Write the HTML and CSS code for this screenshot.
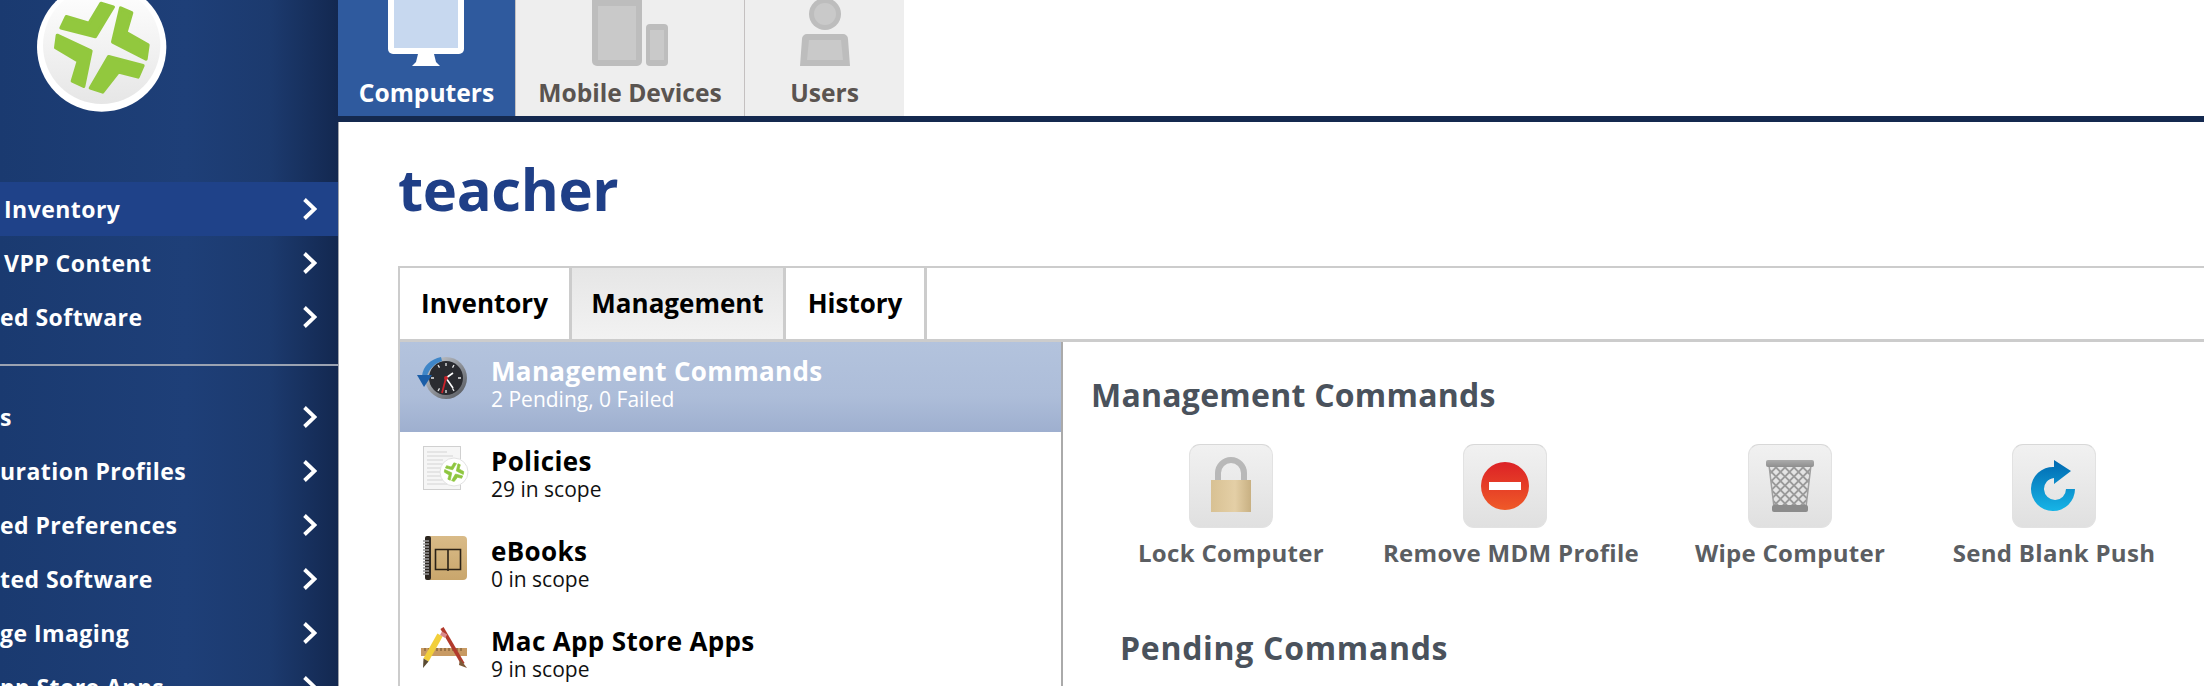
FILE: index.html
```html
<!DOCTYPE html>
<html lang="en">
<head>
<meta charset="utf-8">
<title>teacher</title>
<link rel="stylesheet" href="styles.css">
</head>
<body>
<aside class="sidebar">
  <div class="logo-wrap">
    <svg class="logo" width="170" height="182" viewBox="0 0 510 546">
      <defs><linearGradient id="lg" x1="0" y1="0" x2="0" y2="1"><stop offset="0" stop-color="#fff"/><stop offset="1" stop-color="#e6e6e6"/></linearGradient></defs>
      <circle cx="245" cy="141" r="194" fill="#fff"/>
      <circle cx="245" cy="136" r="176" fill="url(#lg)"/>
      <g fill="#92c83e" stroke="#92c83e" stroke-width="10" stroke-linejoin="round">
        <polygon points="139,50 207,70 243,10 280,21 226,110 123,84"/>
        <polygon points="302,24 335,38 318,97 384,135 378,177 278,126"/>
        <polygon points="266,170 369,197 354,231 295,216 248,276 211,264"/>
        <polygon points="112,106 213,153 191,259 157,243 175,183 107,143"/>
      </g>
    </svg>
  </div>
  <nav class="nav">
    <a class="nav-item active"><span class="nav-text pad4">Inventory</span><svg class="chev" viewBox="0 0 15 24"><path d="M2.5 2.5 12.5 12 2.5 21.5"/></svg></a>
    <a class="nav-item"><span class="nav-text pad4">VPP Content</span><svg class="chev" viewBox="0 0 15 24"><path d="M2.5 2.5 12.5 12 2.5 21.5"/></svg></a>
    <a class="nav-item"><span class="nav-text">ed Software</span><svg class="chev" viewBox="0 0 15 24"><path d="M2.5 2.5 12.5 12 2.5 21.5"/></svg></a>
    <div class="nav-sep"></div>
    <a class="nav-item"><span class="nav-text">s</span><svg class="chev" viewBox="0 0 15 24"><path d="M2.5 2.5 12.5 12 2.5 21.5"/></svg></a>
    <a class="nav-item"><span class="nav-text">uration Profiles</span><svg class="chev" viewBox="0 0 15 24"><path d="M2.5 2.5 12.5 12 2.5 21.5"/></svg></a>
    <a class="nav-item"><span class="nav-text">ed Preferences</span><svg class="chev" viewBox="0 0 15 24"><path d="M2.5 2.5 12.5 12 2.5 21.5"/></svg></a>
    <a class="nav-item"><span class="nav-text">ted Software</span><svg class="chev" viewBox="0 0 15 24"><path d="M2.5 2.5 12.5 12 2.5 21.5"/></svg></a>
    <a class="nav-item"><span class="nav-text">ge Imaging</span><svg class="chev" viewBox="0 0 15 24"><path d="M2.5 2.5 12.5 12 2.5 21.5"/></svg></a>
    <a class="nav-item"><span class="nav-text">pp Store Apps</span><svg class="chev" viewBox="0 0 15 24"><path d="M2.5 2.5 12.5 12 2.5 21.5"/></svg></a>
  </nav>
</aside>
<main class="main">
  <div class="top-tabs">
    <a class="top-tab tab-computers active">
      <svg class="top-icon" width="177" height="66" viewBox="0 0 177 66">
        <path d="M50 -10H126V49a5 5 0 0 1-5 5H55a5 5 0 0 1-5-5Z" fill="#fff"/>
        <rect x="56" y="-10" width="64" height="58" fill="#c7d8ef"/>
        <path d="M80 54H96L98 62 102 66H74L78 62Z" fill="#fff"/>
      </svg>
      <span class="top-label">Computers</span>
    </a>
    <a class="top-tab tab-mobile">
      <svg class="top-icon" width="228" height="66" viewBox="0 0 228 66">
        <rect x="76" y="-6" width="50" height="72" rx="5" fill="#bdbdbd"/>
        <rect x="82" y="6" width="38" height="54" fill="#c9c9c9"/>
        <rect x="130" y="24" width="22" height="42" rx="4" fill="#bdbdbd"/>
        <rect x="134" y="30" width="14" height="30" fill="#c9c9c9"/>
      </svg>
      <span class="top-label">Mobile Devices</span>
    </a>
    <a class="top-tab tab-users">
      <svg class="top-icon" width="160" height="66" viewBox="0 0 160 66">
        <circle cx="80" cy="14" r="16" fill="#bdbdbd"/>
        <circle cx="80" cy="14" r="11" fill="#c9c9c9"/>
        <path d="M62 34H98a5 5 0 0 1 5 5L105 66H55L57 39a5 5 0 0 1 5-5Z" fill="#bdbdbd"/>
        <path d="M64 40H96L98 60H62Z" fill="#c9c9c9"/>
      </svg>
      <span class="top-label">Users</span>
    </a>
  </div>
  <div class="top-rule"></div>
  <div class="content">
    <h1 class="title">teacher</h1>
    <section class="panel">
      <div class="panel-tabs">
        <a class="panel-tab t-inv">Inventory</a>
        <a class="panel-tab t-mgmt active">Management</a>
        <a class="panel-tab t-hist">History</a>
      </div>
      <div class="panel-body">
        <ul class="list">
          <li class="li selected">
            <svg class="li-icon" width="52" height="52" viewBox="0 0 52 52">
              <defs><linearGradient id="cl" x1="0" y1="0" x2="1" y2="1"><stop offset="0" stop-color="#d0d4da"/><stop offset="1" stop-color="#4f5258"/></linearGradient></defs>
              <circle cx="29" cy="26" r="21" fill="url(#cl)"/>
              <circle cx="29" cy="26" r="17" fill="#2a2b30"/>
              <g stroke="#e8e8e8" stroke-width="1.3"><path d="M29 11v3M29 38v3M14 26h3M41 26h3M21 13l1.5 2.6M37 13l-1.5 2.6M21 39l1.5-2.6M37 39l-1.5-2.6"/></g>
              <path d="M29 26 36 21M29 26 36 36" stroke="#fff" stroke-width="1.6"/>
              <path d="M29 26 25 41" stroke="#c8222a" stroke-width="1.8"/>
              <circle cx="29" cy="26" r="2" fill="#c8222a"/>
              <path d="M5 24C6 14 14 7 24 5L25 9C18 11 12 17 10 24Z" fill="#3f86c8"/>
              <path d="M0 23H15L7 35Z" fill="#1b5ea8"/>
            </svg>
            <div class="li-text"><div class="li-title">Management Commands</div><div class="li-sub">2 Pending, 0 Failed</div></div>
          </li>
          <li class="li">
            <svg class="li-icon" width="52" height="52" viewBox="0 0 52 52">
              <rect x="6.5" y="4.5" width="37" height="43" fill="#f6f6f6" stroke="#d0d0d0"/>
              <path d="M10 10H30M10 14H36M10 18H26M10 22H36M10 26H28M10 30H26M10 34H24M10 38H26M10 42H36" stroke="#d4d4d4"/>
              <circle cx="37" cy="30" r="14" fill="#fff" stroke="#e2e2e2"/>
              <g transform="translate(37 30) scale(.07) translate(-245 -141)" fill="#8ec63f" stroke="#8ec63f" stroke-width="10" stroke-linejoin="round">
                <polygon points="139,50 207,70 243,10 280,21 226,110 123,84"/>
                <polygon points="302,24 335,38 318,97 384,135 378,177 278,126"/>
                <polygon points="266,170 369,197 354,231 295,216 248,276 211,264"/>
                <polygon points="112,106 213,153 191,259 157,243 175,183 107,143"/>
              </g>
            </svg>
            <div class="li-text"><div class="li-title">Policies</div><div class="li-sub">29 in scope</div></div>
          </li>
          <li class="li">
            <svg class="li-icon" width="52" height="52" viewBox="0 0 52 52">
              <defs><linearGradient id="bk" x1="0" y1="0" x2="0" y2="1"><stop offset="0" stop-color="#d9bb88"/><stop offset="1" stop-color="#c9a66c"/></linearGradient></defs>
              <rect x="8" y="4" width="42" height="44" rx="4" fill="url(#bk)"/>
              <rect x="8" y="4" width="6" height="44" rx="2" fill="#2c2620"/>
              <path d="M6 9h6M6 12h6M6 15h6M6 18h6M6 21h6M6 24h6M6 27h6M6 30h6M6 33h6M6 36h6M6 39h6M6 42h6" stroke="#9a9a9a" stroke-width="1.4"/>
              <path d="M18.5 17.500H43.500V37.500H18.500ZM31 17.500V39" fill="none" stroke="#2b2217" stroke-width="1.600"/>
            </svg>
            <div class="li-text"><div class="li-title">eBooks</div><div class="li-sub">0 in scope</div></div>
          </li>
          <li class="li">
            <svg class="li-icon" width="52" height="52" viewBox="0 0 52 52">
              <rect x="4" y="26" width="46" height="8" fill="#c89a63"/>
              <path d="M8 26v3M12 26v3M16 26v3M20 26v3M24 26v3M28 26v3M32 26v3M36 26v3M40 26v3M44 26v3" stroke="#6f4e2b"/>
              <path d="M25 6 46 42" stroke="#b23a2c" stroke-width="3.600"/>
              <path d="M43 37 50 46 42 43Z" fill="#7d5a38"/>
              <path d="M23 13 9 38" stroke="#f2cf3a" stroke-width="6"/>
              <path d="M23 13l2-3.500 5.200 3-2 3.500Z" fill="#d98a8a"/>
              <path d="M6.500 36.500 11.500 39.500 6 46Z" fill="#5a4a32"/>
            </svg>
            <div class="li-text"><div class="li-title">Mac App Store Apps</div><div class="li-sub">9 in scope</div></div>
          </li>
        </ul>
        <div class="pane">
          <h2 class="pane-title">Management Commands</h2>
          <div class="cmds">
            <div class="cmd">
              <div class="cmd-box">
                <svg width="82" height="82" viewBox="0 0 82 82">
                  <defs><linearGradient id="lk" x1="0" y1="0" x2="1" y2="0"><stop offset="0" stop-color="#d8c193"/><stop offset=".6" stop-color="#e4cfa6"/><stop offset="1" stop-color="#c8b082"/></linearGradient></defs>
                  <path d="M28 36V28a13 13 0 0 1 26 0V36" fill="none" stroke="#b8b8b8" stroke-width="6"/>
                  <rect x="21" y="35" width="40" height="32" fill="url(#lk)"/>
                </svg>
              </div>
              <div class="cmd-label">Lock Computer</div>
            </div>
            <div class="cmd">
              <div class="cmd-box">
                <svg width="82" height="82" viewBox="0 0 82 82">
                  <defs><linearGradient id="nr" x1="0" y1="0" x2="0" y2="1"><stop offset="0" stop-color="#dc2226"/><stop offset="1" stop-color="#ef5a28"/></linearGradient></defs>
                  <circle cx="41" cy="41" r="24" fill="url(#nr)"/>
                  <rect x="25" y="37" width="32" height="8" fill="#fff"/>
                </svg>
              </div>
              <div class="cmd-label shift">Remove MDM Profile</div>
            </div>
            <div class="cmd">
              <div class="cmd-box">
                <svg width="82" height="82" viewBox="0 0 82 82">
                  <defs>
                    <pattern id="mesh" width="9" height="9" patternUnits="userSpaceOnUse"><rect width="9" height="9" fill="#e4e4e4"/><path d="M0 4.500 4.500 0 9 4.500 4.500 9Z" fill="none" stroke="#9a9a9a" stroke-width="1.800"/></pattern>
                    <linearGradient id="tr" x1="0" y1="0" x2="0" y2="1"><stop offset="0" stop-color="#ababab"/><stop offset="1" stop-color="#8f8f8f"/></linearGradient>
                  </defs>
                  <path d="M20 20H62L57 62H25Z" fill="url(#mesh)" stroke="#a0a0a0" stroke-width="1.500"/>
                  <rect x="17" y="15" width="48" height="7" rx="2" fill="url(#tr)"/>
                  <rect x="23" y="60" width="36" height="7" rx="2" fill="#8c8c8c"/>
                </svg>
              </div>
              <div class="cmd-label">Wipe Computer</div>
            </div>
            <div class="cmd">
              <div class="cmd-box">
                <svg width="82" height="82" viewBox="0 0 82 82">
                  <defs><linearGradient id="ar" x1="0" y1="0" x2="0" y2="1"><stop offset="0" stop-color="#0068b0"/><stop offset="1" stop-color="#17b4e6"/></linearGradient></defs>
                  <path d="M62 44H53A11 11 0 1 1 41 33V39L58 26 41 15V22A22 22 0 1 0 62 44Z" fill="url(#ar)"/>
                </svg>
              </div>
              <div class="cmd-label">Send Blank Push</div>
            </div>
          </div>
          <h2 class="pane-title pending">Pending Commands</h2>
        </div>
      </div>
    </section>
  </div>
</main>
</body>
</html>
```
FILE: styles.css
```css
* { box-sizing: border-box; }
html, body { margin: 0; padding: 0; height: 686px; overflow: hidden; background: #fff; }
body { display: flex; font-family: "Open Sans", "DejaVu Sans", sans-serif; }

/* Sidebar */
.sidebar {
  width: 338px;
  flex: none;
  height: 686px;
  overflow: hidden;
  background: linear-gradient(90deg, #1a3a70 0%, #1e3f78 55%, #1c3a6e 80%, #132850 100%);
}
.logo-wrap { height: 182px; padding-left: 20px; overflow: hidden; }
.logo { display: block; }
.nav-item {
  height: 54px;
  display: flex;
  align-items: center;
  justify-content: space-between;
  padding-right: 21px;
  color: #fff;
  font-weight: 700;
  font-size: 23px;
  letter-spacing: .45px;
}
.nav-item.active { background: #1f4289; }
.nav-text { white-space: nowrap; }
.pad4 { padding-left: 4px; }
.chev { width: 15px; height: 24px; fill: none; stroke: #fff; stroke-width: 3.8; }
.nav-sep { height: 2px; margin: 20px 0 24px; background: #9ba3b2; }

/* Main */
.main { flex: 1; min-width: 0; height: 686px; overflow: hidden; display: flex; flex-direction: column; }
.top-tabs { height: 116px; display: flex; flex: none; }
.top-tab { display: block; height: 116px; background: #eeeeee; color: #5a5450; text-align: center; overflow: hidden; }
.top-tab.active { background: #2f5a9e; color: #fff; }
.tab-computers { width: 177px; }
.tab-mobile { width: 229px; border-left: 1px solid #c4c0c0; }
.tab-users { width: 160px; border-left: 1px solid #c4c0c0; }
.top-icon { display: block; overflow: hidden; }
.top-label { display: block; height: 50px; line-height: 53px; font-weight: 700; font-size: 24.6px; }
.top-rule { height: 6px; flex: none; background: #14294f; }

.content { flex: 1; min-height: 0; border-left: 1px solid #a0a4ac; padding-left: 59px; display: flex; flex-direction: column; }
.title { margin: 0; height: 144px; padding-top: 27px; line-height: 80px; font-size: 58px; letter-spacing: -.4px; font-weight: 700; color: #1f3f87; }

.panel { flex: 1; min-height: 0; border-top: 2px solid #cccccc; border-left: 2px solid #cccccc; display: flex; flex-direction: column; }
.panel-tabs { height: 74px; flex: none; display: flex; border-bottom: 3px solid #cccccc; }
.panel-tab { display: flex; align-items: center; justify-content: center; padding-bottom: 2px; border-right: 3px solid #cccccc; font-size: 26px; font-weight: 700; color: #000; }
.t-inv { width: 172px; }
.t-mgmt { width: 214px; background: linear-gradient(180deg, #e6e6e6, #f2f2f2); }
.t-hist { width: 141px; }

.panel-body { flex: 1; display: flex; min-height: 0; }
.list { width: 663px; flex: none; margin: 0; padding: 0; list-style: none; border-right: 2px solid #aaaaaa; }
.li { height: 90px; padding: 10px 0 0 17px; display: flex; }
.li.selected { background: linear-gradient(180deg, #b3c3dd 0%, #adbdd9 60%, #9eafcf 100%); }
.li-icon { flex: none; display: block; }
.li-text { margin-left: 22px; padding-top: 5px; }
.li-title { line-height: 28px; font-size: 26px; font-weight: 700; letter-spacing: .35px; color: #000; white-space: nowrap; }
.li-sub { line-height: 28px; font-size: 21px; color: #111; white-space: nowrap; }
.li.selected .li-title, .li.selected .li-sub { color: #fff; }

.pane { flex: 1; min-width: 0; padding: 36px 0 0 28px; }
.pane-title { margin: 0; line-height: 34px; font-size: 32px; font-weight: 700; letter-spacing: .25px; color: #4a525c; white-space: nowrap; }
.pending { margin: 63px 0 0 29px; letter-spacing: .7px; }
.cmds { display: grid; grid-template-columns: 200px 348px 222px 306px; margin: 32px 0 0 40px; }
.cmd { display: flex; flex-direction: column; align-items: center; }
.cmd-box {
  width: 84px;
  height: 84px;
  border: 1px solid #e2e2e2;
  border-top-color: #d8d8d8;
  border-radius: 11px;
  background: linear-gradient(180deg, #f1f1f1, #e0e0e0);
}
.cmd-box svg { display: block; }
.cmd-label { margin-top: 10px; line-height: 30px; font-size: 24px; font-weight: 700; letter-spacing: .3px; color: #5b5e62; white-space: nowrap; }
.shift { padding-left: 12px; }
```
